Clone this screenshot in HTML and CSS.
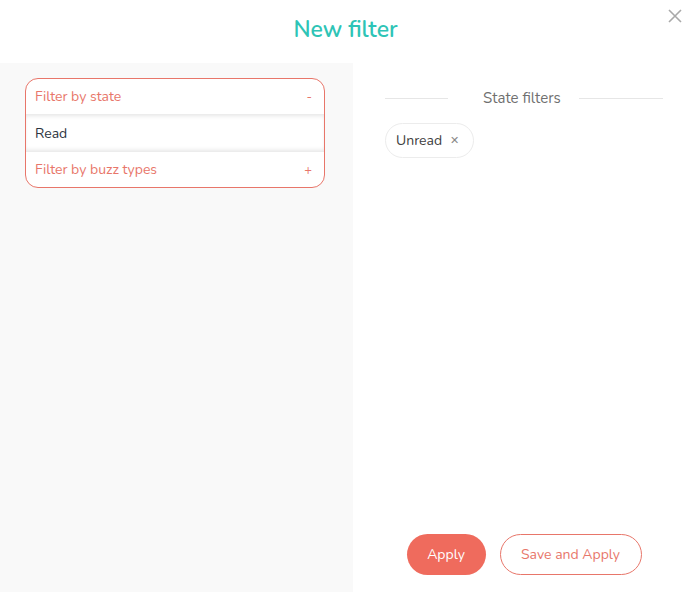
FILE: index.html
```html
<!DOCTYPE html>
<html lang="en">
<head>
  <meta charset="UTF-8" />
  <title>New filter</title>
  <link rel="stylesheet" href="styles.css">
</head>
<body>
  <div class="modal">
    <div class="modal-header">
      <h1>New filter</h1>
      <button class="close-btn" aria-label="Close">
        <svg width="14" height="14" viewBox="0 0 14 14"><path d="M1 1L13 13M13 1L1 13" stroke="#a9a9a9" stroke-width="1.6" fill="none"/></svg>
      </button>
    </div>
    <div class="modal-body">
      <div class="left-panel">
        <div class="filter-box">
          <div class="filter-row filter-title">
            <span>Filter by state</span>
            <span class="toggle">-</span>
          </div>
          <div class="filter-row filter-option">Read</div>
          <div class="filter-row filter-title">
            <span>Filter by buzz types</span>
            <span class="toggle">+</span>
          </div>
        </div>
      </div>
      <div class="right-panel">
        <div class="section-title">
          <span class="line line-left"></span>
          <span class="label">State filters</span>
          <span class="line"></span>
        </div>
        <div class="chips">
          <div class="chip">Unread <span class="chip-x">&#x2715;</span></div>
        </div>
        <div class="actions">
          <button class="btn btn-primary">Apply</button>
          <button class="btn btn-outline">Save and Apply</button>
        </div>
      </div>
    </div>
  </div>
</body>
</html>
```

FILE: styles.css
```css
* {
  margin: 0;
  padding: 0;
  box-sizing: border-box;
}

body {
  font-family: 'Nunito', 'Noto Sans', sans-serif;
  background: white;
  width: 691px;
  height: 592px;
  overflow: hidden;
}

.modal {
  display: flex;
  flex-direction: column;
  height: 592px;
}

.modal-header {
  height: 63px;
  position: relative;
  display: flex;
  justify-content: center;
  align-items: center;
}

h1 {
  font-size: 23px;
  font-weight: 600;
  color: #2ec4b6;
  margin-top: -5px;
}

.close-btn {
  position: absolute;
  top: 9px;
  right: 9px;
  background: none;
  border: none;
  width: 14px;
  height: 14px;
}

.modal-body {
  flex: 1;
  display: flex;
}

.left-panel {
  width: 353px;
  background: #f9f9f9;
  padding: 15px 28px 0 25px;
}

.filter-box {
  border: 1px solid #e8766a;
  border-radius: 13px;
  background: white;
  overflow: hidden;
}

.filter-row {
  display: flex;
  justify-content: space-between;
  align-items: center;
  padding: 0 9px;
  font-size: 14px;
}

.filter-title {
  height: 35px;
  color: #e8766a;
}

.filter-title + .filter-option {
  box-shadow: inset 0 4px 4px -2px #e6e6e6, inset 0 -4px 4px -2px #e6e6e6;
  height: 38px;
  color: #2c3440;
}

.toggle {
  font-size: 13px;
  padding-right: 3px;
}

.right-panel {
  flex: 1;
  display: flex;
  flex-direction: column;
  padding: 25px 28px 17px 32px;
}

.section-title {
  display: flex;
  align-items: center;
}

.section-title .line {
  flex: 1;
  height: 1px;
  background: #e6e6e6;
}

.section-title .line-left {
  flex: none;
  width: 63px;
}

.section-title .label {
  font-size: 15px;
  color: #707070;
  padding: 0 18px 0 35px;
}

.chips {
  display: flex;
  margin-top: 15px;
}

.chip {
  border: 1px solid #ececec;
  border-radius: 18px;
  padding: 0 14px 0 10px;
  height: 35px;
  display: flex;
  align-items: center;
  gap: 8px;
  font-size: 14px;
  color: #404040;
}

.chip-x {
  font-size: 11px;
  color: #888;
}

.actions {
  margin-top: auto;
  display: flex;
  justify-content: center;
  gap: 14px;
}

.btn {
  height: 41px;
  border-radius: 21px;
  font-family: inherit;
  font-size: 14px;
}

.btn-primary {
  width: 79px;
  background: #ef6b5d;
  color: white;
  border: none;
}

.btn-outline {
  width: 142px;
  background: white;
  color: #e8766a;
  border: 1px solid #e8766a;
}
```
